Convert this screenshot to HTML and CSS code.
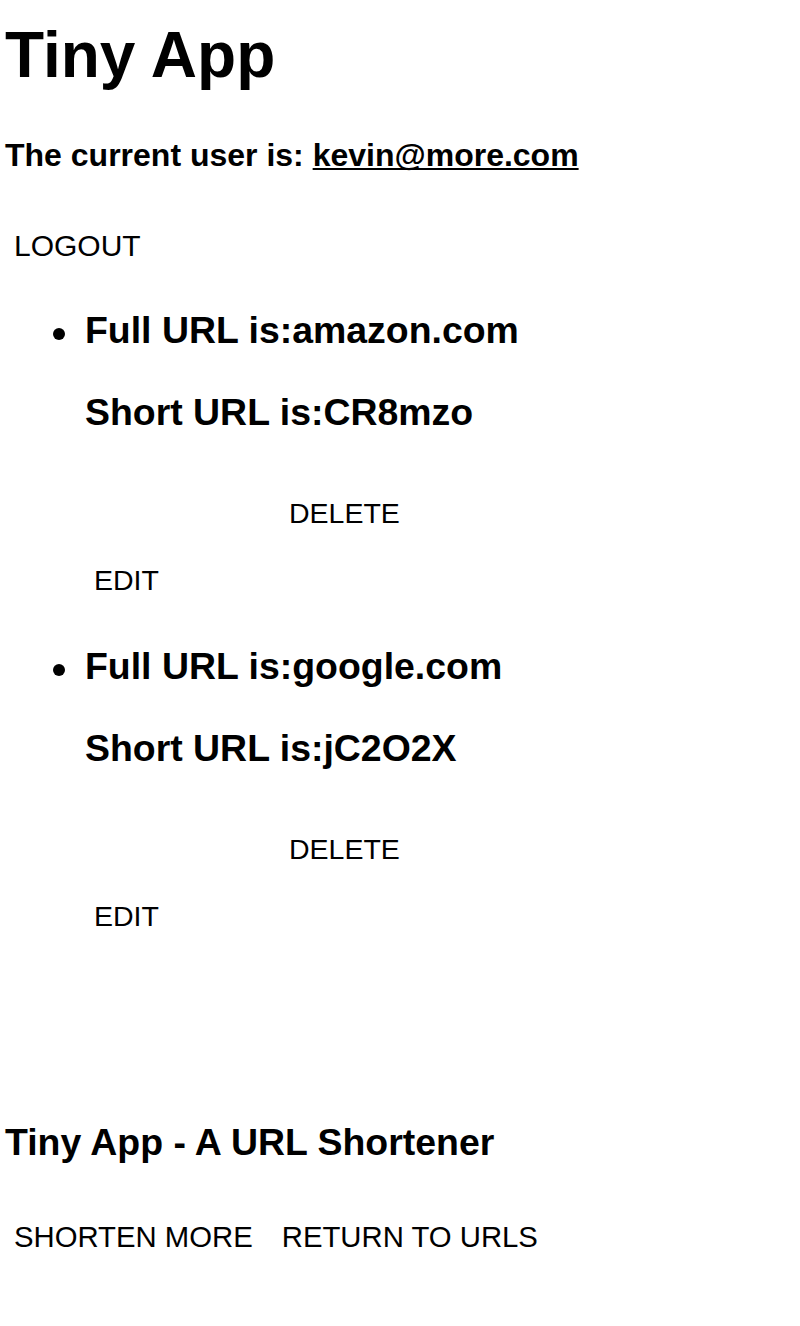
FILE: index.html
```html
<!DOCTYPE html>
<html lang="en">
<head>
<meta charset="utf-8">
<title>Tiny App</title>
<link rel="stylesheet" href="styles.css">
</head>
<body>
<header class="top">
  <h1 class="title">Tiny App</h1>
  <h4 class="user">The current user is: <a class="user-link" href="#">kevin@more.com</a></h4>
  <form class="logout-form"><button class="btn btn-logout" type="button">LOGOUT</button></form>
</header>
<ul class="url-list">
  <li class="url-item">
    <h3 class="url-line url-full">Full URL is:amazon.com</h3>
    <h3 class="url-line url-short">Short URL is:CR8mzo</h3>
    <form class="delete-form"><button class="btn" type="button">DELETE</button></form>
    <form class="edit-form"><button class="btn" type="button">EDIT</button></form>
  </li>
  <li class="url-item">
    <h3 class="url-line url-full">Full URL is:google.com</h3>
    <h3 class="url-line url-short">Short URL is:jC2O2X</h3>
    <form class="delete-form"><button class="btn" type="button">DELETE</button></form>
    <form class="edit-form"><button class="btn" type="button">EDIT</button></form>
  </li>
</ul>
<footer class="footer">
  <h3 class="footer-title">Tiny App - A URL Shortener</h3>
  <div class="footer-actions">
    <button class="btn btn-big" type="button">SHORTEN MORE</button>
    <button class="btn btn-big" type="button">RETURN TO URLS</button>
  </div>
</footer>
</body>
</html>
```
FILE: styles.css
```css
html, body {
  background: #fff;
}
body {
  margin: 0;
  padding: 0 5px;
  font-family: "Liberation Sans", Arial, sans-serif;
  color: #000;
}
.title {
  margin: 18px 0 0;
  font-size: 64px;
  line-height: 74px;
  font-weight: bold;
}
.user {
  margin: 45px 0 0;
  font-size: 32px;
  line-height: 37px;
  font-weight: bold;
}
.user-link {
  color: #000;
  text-decoration: underline;
  text-decoration-thickness: 2px;
  text-underline-offset: 2px;
  text-decoration-skip-ink: none;
}
.logout-form {
  margin: 55px 0 0;
}
.btn {
  display: inline-block;
  background: none;
  border: 0;
  margin: 0;
  padding: 0 9px;
  font-family: "Liberation Sans", Arial, sans-serif;
  font-size: 28.5px;
  line-height: 34px;
  color: #000;
  cursor: pointer;
}
.btn-logout {
  font-size: 30px;
}
.btn-big {
  font-size: 29.3px;
}
.url-list {
  margin: 46px 0 0;
  padding: 0 0 0 80px;
  list-style: none;
}
.url-item + .url-item {
  margin-top: 48px;
}
.url-line {
  margin: 0;
  font-size: 37.44px;
  line-height: 43px;
  font-weight: bold;
}
.url-full {
  position: relative;
}
.url-full::before {
  content: "";
  position: absolute;
  left: -32px;
  top: 19px;
  width: 12px;
  height: 12px;
  border-radius: 50%;
  background: #000;
}
.url-short {
  margin-top: 39px;
}
.delete-form {
  margin: 62px 0 0;
  padding-left: 195px;
}
.edit-form {
  margin: 33px 0 0;
}
.footer-title {
  margin: 188px 0 0;
  font-size: 37.44px;
  line-height: 43px;
  font-weight: bold;
}
.footer-actions {
  margin: 56px 0 0;
  display: flex;
  gap: 11px;
}
```
